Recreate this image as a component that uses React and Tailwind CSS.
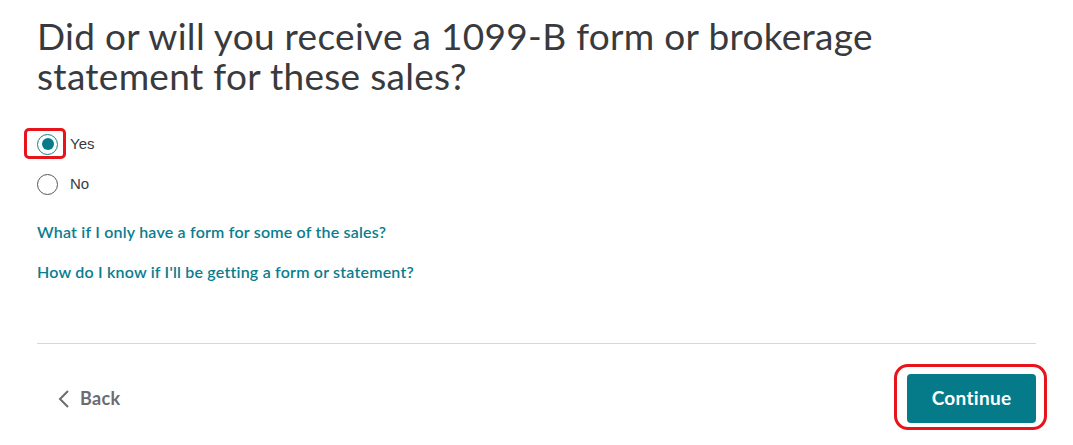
const Radio = ({ checked, label }) => {
  return (
    <label className="flex items-center gap-[12px] h-[40px]">
      <span
        className={`flex items-center justify-center w-[21px] h-[21px] rounded-full border-[1.5px] ${
          checked ? "border-[#0b8492]" : "border-[#55565b]"
        }`}
      >
        {checked && <span className="w-[12px] h-[12px] rounded-full bg-[#077b89]" />}
      </span>
      <span className="text-[15px] text-[#393a3d] font-['Liberation_Sans',sans-serif]">{label}</span>
    </label>
  );
};

const App = () => {
  return (
    <div className="w-[1073px] h-[445px] bg-white font-['Lato',sans-serif] text-[#393a3d] px-[37px] pt-[16px]">
      <h1 className="text-[37px] leading-[40px] font-normal tracking-[0.3px] w-[900px]">
        Did or will you receive a 1099-B form or brokerage statement for these sales?
      </h1>

      <div className="mt-[28px] flex flex-col">
        <div className="relative w-max">
          <div className="absolute left-[-13px] top-[4px] w-[42px] h-[31px] border-[3px] border-[#e8141c] rounded-[5px]" />
          <Radio checked label="Yes" />
        </div>
        <Radio label="No" />
      </div>

      <div className="mt-[16px] flex flex-col gap-[16px] text-[16px] leading-[24px] font-semibold tracking-[0.2px] text-[#0a7d8f]">
        <a>What if I only have a form for some of the sales?</a>
        <a>How do I know if I'll be getting a form or statement?</a>
      </div>

      <div className="mt-[59px] border-t border-[#d6d7da]" />

      <div className="flex items-center justify-between mt-[30px]">
        <button className="flex items-center gap-[10px] ml-[21px] text-[18px] font-bold tracking-[0.3px] text-[#6b6c72]">
          <svg width="12" height="20" viewBox="0 0 12 20" fill="none">
            <path d="M10 2 L2 10 L10 18" stroke="#6b6c72" strokeWidth="2" />
          </svg>
          Back
        </button>
        <div className="relative">
          <div className="absolute left-[-13px] top-[-10px] right-[-11px] bottom-[-7px] border-[3px] border-[#e8141c] rounded-[14px]" />
          <button className="w-[129px] h-[49px] rounded-[4px] bg-[#057b89] text-white text-[19px] font-bold tracking-[0.3px]">
            Continue
          </button>
        </div>
      </div>
    </div>
  );
};

export default App;
